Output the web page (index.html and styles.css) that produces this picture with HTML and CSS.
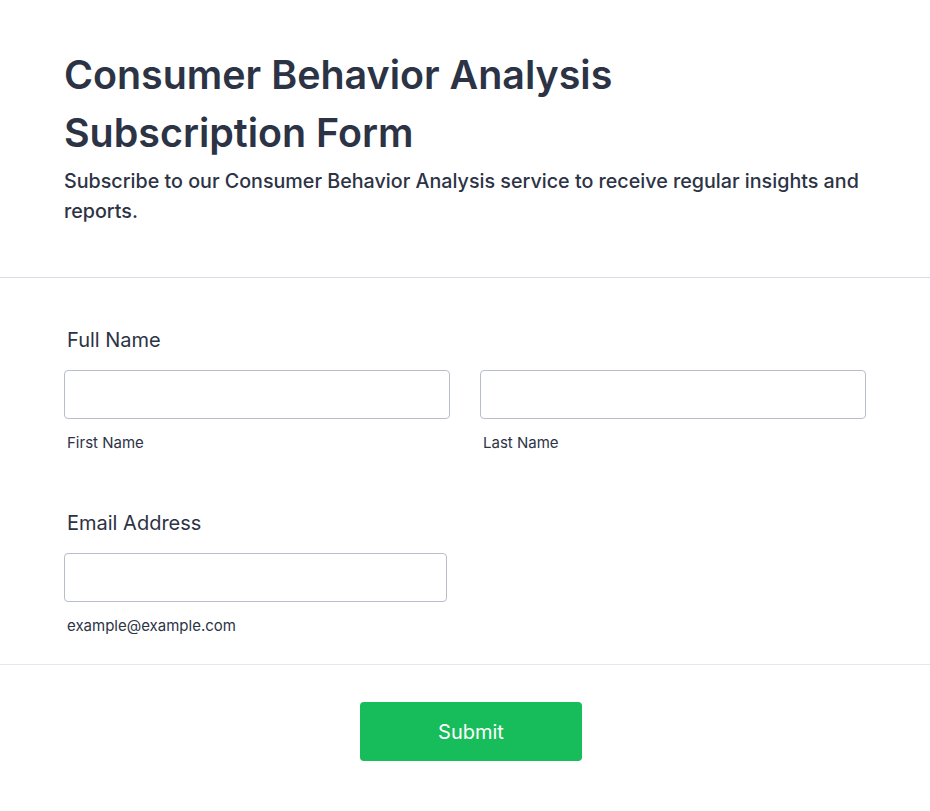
FILE: index.html
```html
<!DOCTYPE html>
<html lang="en">
<head>
<meta charset="utf-8">
<title>Consumer Behavior Analysis Subscription Form</title>
<link rel="stylesheet" href="styles.css">
</head>
<body>
<main class="form">
  <header class="form-header">
    <h1 class="title">Consumer Behavior Analysis Subscription Form</h1>
    <p class="subtitle">Subscribe to our Consumer Behavior Analysis service to receive regular insights and reports.</p>
  </header>
  <section class="form-body">
    <div class="field">
      <label class="label">Full Name</label>
      <div class="name-grid">
        <div class="sub-field">
          <input class="input" type="text">
          <span class="sublabel">First Name</span>
        </div>
        <div class="sub-field">
          <input class="input" type="text">
          <span class="sublabel">Last Name</span>
        </div>
      </div>
    </div>
    <div class="field field-email">
      <label class="label">Email Address</label>
      <div class="sub-field email">
        <input class="input" type="email">
        <span class="sublabel">example@example.com</span>
      </div>
    </div>
  </section>
  <footer class="form-footer">
    <button class="submit" type="button">Submit</button>
  </footer>
</main>
</body>
</html>
```

FILE: styles.css
```css
* { box-sizing: border-box; }
html, body { margin: 0; padding: 0; background: #fff; }
body {
  font-family: Inter, "Noto Sans", sans-serif;
  color: #2c3345;
}
.form-header {
  padding: 47px 64px 51px;
  border-bottom: 1px solid #d8dae6;
}
.title {
  margin: 0;
  font-size: 39.4px;
  font-weight: 600;
  line-height: 57.6px;
  color: #2c3345;
  max-width: 600px;
}
.subtitle {
  margin: 4px 0 0;
  font-size: 19.7px;
  font-weight: 500;
  line-height: 30px;
  color: #2c3345;
}
.form-body {
  padding: 51px 64px 29px;
  border-bottom: 1px solid #e6e7f0;
}
.field { display: flex; flex-direction: column; }
.field-email { margin-top: 60px; }
.label {
  font-size: 20px;
  font-weight: 400;
  line-height: 22px;
  margin: 0 0 19px 3px;
}
.name-grid {
  display: grid;
  grid-template-columns: 1fr 1fr;
  column-gap: 30px;
}
.sub-field { display: flex; flex-direction: column; }
.sub-field.email { width: 383px; }
.input {
  height: 49px;
  border: 1px solid #b8bdc9;
  border-radius: 4px;
  background: #fff;
  font: inherit;
  padding: 0 12px;
}
.sublabel {
  margin: 15px 0 0 3px;
  font-size: 15px;
  line-height: 18px;
  color: #2c3345;
}
.form-footer {
  display: flex;
  justify-content: center;
  padding: 37px 0 40px 12px;
}
.submit {
  width: 222px;
  height: 59px;
  border: none;
  border-radius: 4px;
  background: #18bd5b;
  color: #fff;
  font-family: Inter, "Noto Sans", sans-serif;
  font-size: 20px;
  font-weight: 400;
  cursor: pointer;
}
```
